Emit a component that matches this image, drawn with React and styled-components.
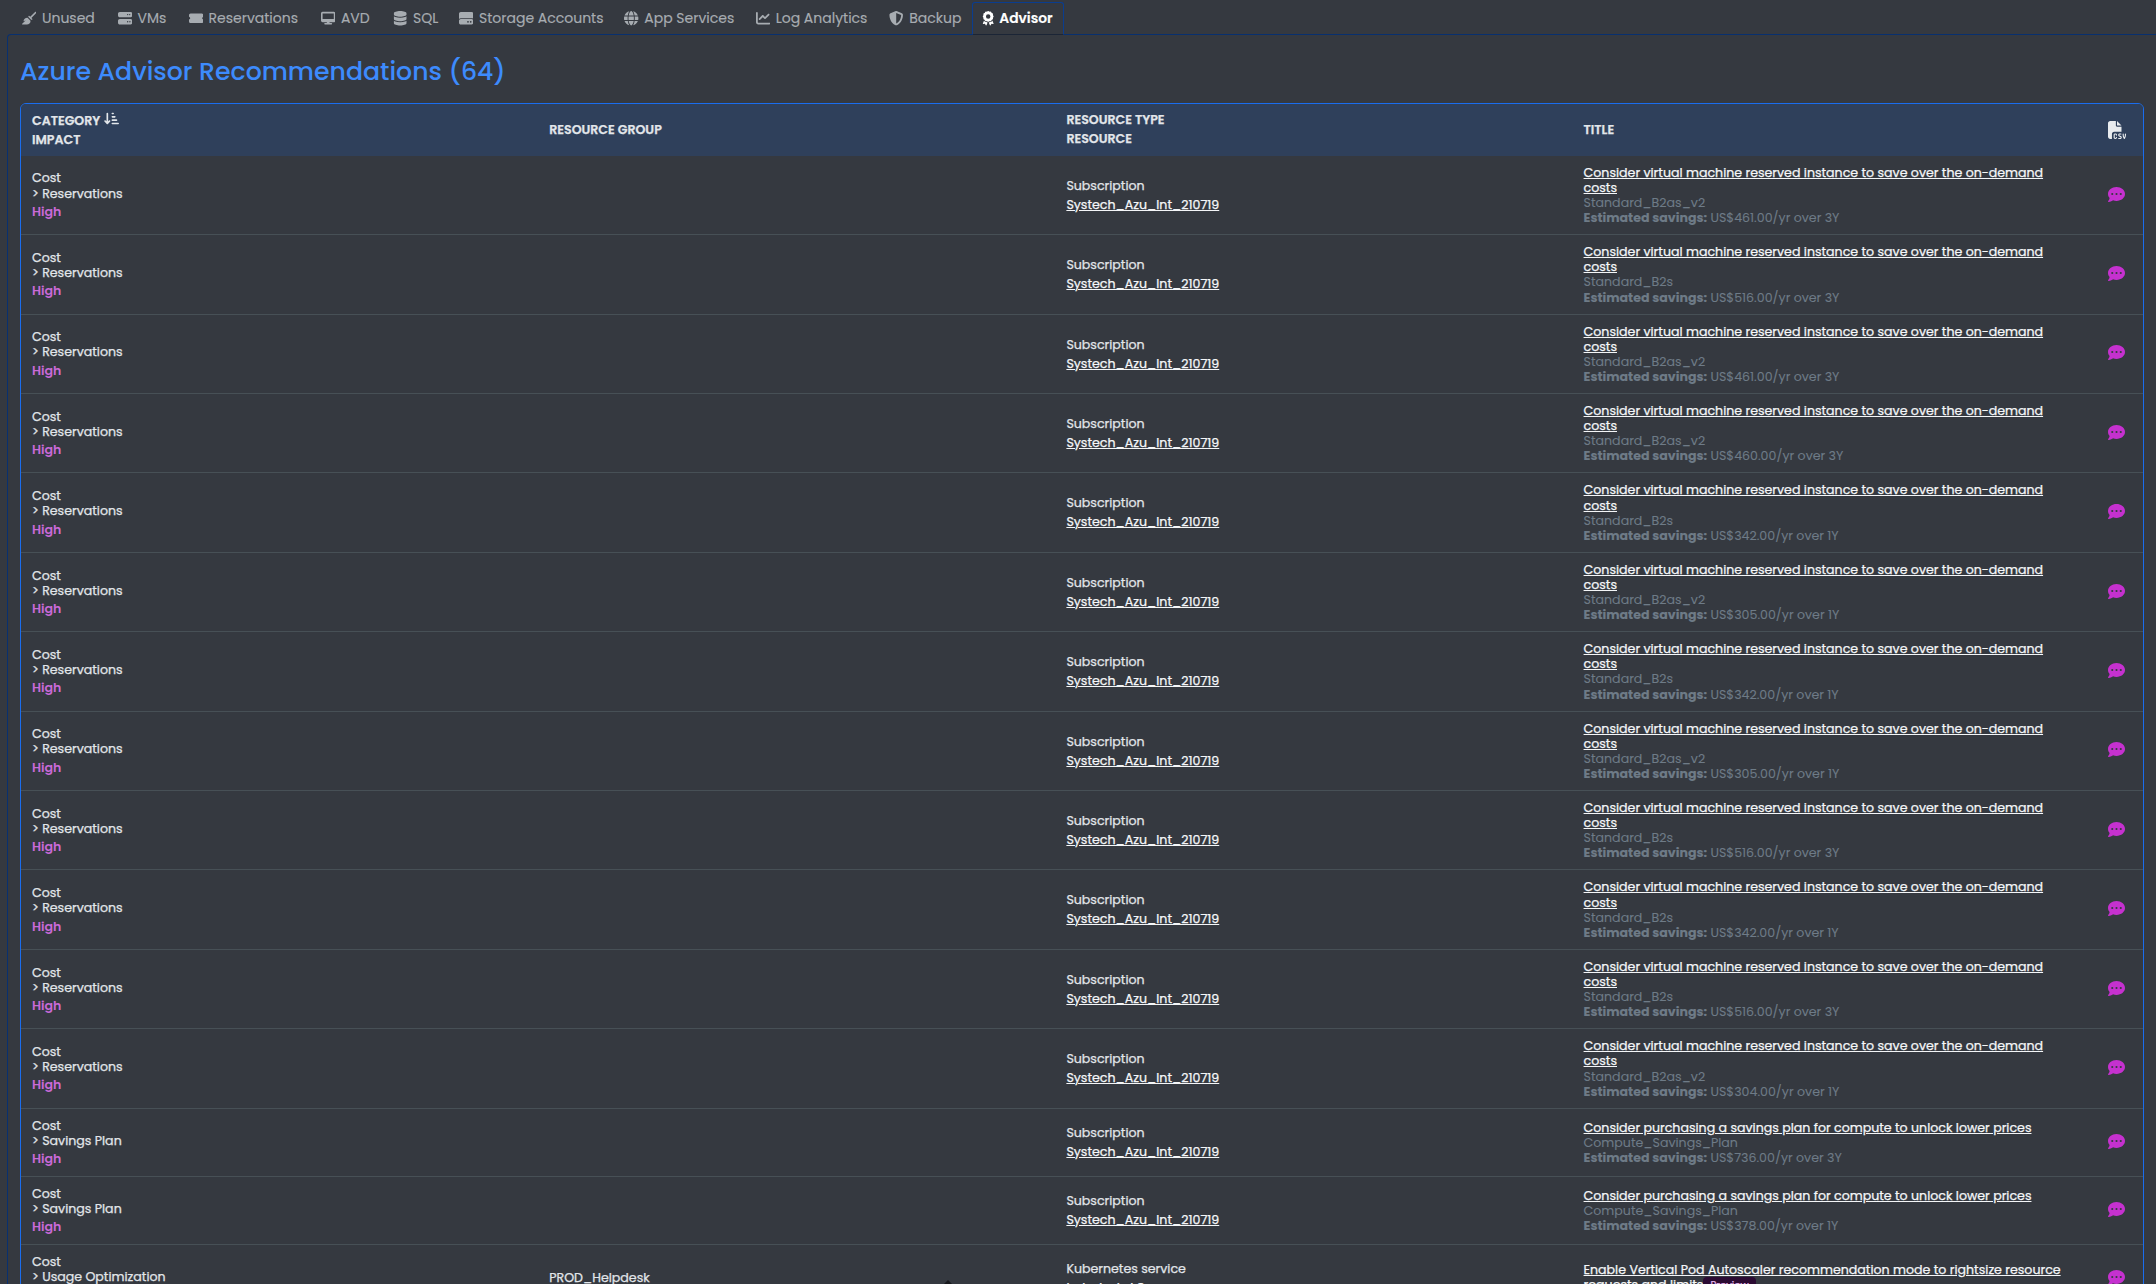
import React from "react";

import styled, { createGlobalStyle } from "styled-components";
import {
  FaBroom,
  FaServer,
  FaDesktop,
  FaDatabase,
  FaGlobe,
  FaChartLine,
  FaFileCsv,
  FaShieldHalved,
  FaAward,
  FaHardDrive,
  FaArrowDownShortWide,
  FaCommentDots,
  FaTicketSimple,
} from "react-icons/fa6";

const GlobalStyle = createGlobalStyle`
  * {
    box-sizing: border-box;
  }

  body {
    margin: 0;
    background: #353940;
    color: #e2e6ea;
    font-family: Poppins, Inter, sans-serif;
    overflow: hidden;
  }
`;

const Page = styled.div`
  display: flex;
  flex-direction: column;
  position: relative;
  height: 1284px;
  overflow: hidden;
  padding: 2px 0 0 7px;
`;

const Tabs = styled.nav`
  display: flex;
  height: 33px;
  padding-left: 5px;
  position: relative;
  z-index: 1;
`;

const Tab = styled.a`
  display: flex;
  align-items: center;
  width: ${(p) => p.$width}px;
  height: 33px;
  padding-left: ${(p) => (p.$active ? 8 : 9)}px;
  gap: ${(p) => (p.$active ? 4 : 5.6)}px;
  border: 1px solid ${(p) => (p.$active ? "#0a3d8f" : "transparent")};
  border-bottom-color: ${(p) => (p.$active ? "#1b2536" : "transparent")};
  border-radius: 3px 3px 0 0;
  color: ${(p) => (p.$active ? "#fff" : "#a7acb1")};
  font-size: ${(p) => (p.$active ? 13.8 : 14)}px;
  font-weight: ${(p) => (p.$active ? 600 : 400)};
  -webkit-text-stroke: 0.15px;
  white-space: nowrap;

  svg {
    flex: none;
    width: auto;
    height: 14.4px;
  }
`;

const Pane = styled.main`
  flex: 1;
  min-height: 0;
  margin-top: -1px;
  padding: 15px 12px 0 12px;
  border: 1px solid #08306f;
  border-width: 1px 0 0 1px;
  border-top-left-radius: 4px;
`;

const Heading = styled.h4`
  margin: 0;
  height: 53px;
  color: #3d8bfd;
  font-size: 25.2px;
  font-weight: 500;
  line-height: 43px;
`;

const Table = styled.div`
  width: 2124px;
  border: 1px solid #1a6dee;
  border-radius: 6px 6px 0 0;
  overflow: hidden;
  font-size: 12.6px;
  line-height: 18.9px;
  -webkit-text-stroke: 0.25px;
`;

const Row = styled.div`
  display: grid;
  grid-template-columns: repeat(4, 517.2px) 1fr;
  align-items: center;
  padding: 9px 0 8.92px;
  border-bottom: 1px solid #475056;
`;

const HeadRow = styled(Row)`
  height: 51.8px;
  padding: 0.8px 0 0;
  border-bottom: 0;
  background: #2f405b;
  font-weight: 600;
`;

const Cell = styled.div`
  padding-left: 11px;
  white-space: nowrap;
`;

const ResourceCell = styled(Cell)`
  padding-top: 1.4px;
`;

const Tight = styled.div`
  line-height: 15.12px;
`;

const Impact = styled.div`
  margin: 2.2px 0 -2.2px;
  color: #c96ad8;
  font-weight: 600;
  -webkit-text-stroke: 0;
`;

const Link = styled.a`
  color: #f4f6f8;
  text-decoration: underline;
`;

const Muted = styled.div`
  color: #6e7b87;
  -webkit-text-stroke: 0.1px;
`;

const SortIcon = styled(FaArrowDownShortWide)`
  margin-left: 1px;
  vertical-align: -1px;
`;

const Preview = styled.span`
  display: inline-block;
  padding: 3px 7px;
  border-radius: 4px;
  background: #2b0b33;
  color: #e3b5ec;
  font-size: 10px;
  line-height: 12px;
`;

const Action = styled.div`
  display: flex;
  padding-left: 18px;
  color: ${(p) => p.$color};
`;

const CommentIcon = styled(FaCommentDots)`
  margin-bottom: 2px;
`;

const ScrollHint = styled.div`
  position: absolute;
  left: 944px;
  bottom: 0;
  border: 4px solid transparent;
  border-top: 0;
  border-bottom-color: #17191d;
`;

const tabs = [
  { label: "Unused", icon: FaBroom, width: 95.5 },
  { label: "VMs", icon: FaServer, width: 71 },
  { label: "Reservations", icon: FaTicketSimple, width: 132.4 },
  { label: "AVD", icon: FaDesktop, width: 72.1 },
  { label: "SQL", icon: FaDatabase, width: 66 },
  { label: "Storage Accounts", icon: FaHardDrive, width: 165.3 },
  { label: "App Services", icon: FaGlobe, width: 131.4 },
  { label: "Log Analytics", icon: FaChartLine, width: 133.6 },
  { label: "Backup", icon: FaShieldHalved, width: 92.7 },
  { label: "Advisor", icon: FaAward, width: 92, active: true },
];

const vm = (sku, saving) => ({
  category: "Reservations",
  title: ["Consider virtual machine reserved instance to save over the on-demand", "costs"],
  sku,
  saving,
});

const plan = (saving) => ({
  category: "Savings Plan",
  title: ["Consider purchasing a savings plan for compute to unlock lower prices"],
  sku: "Compute_Savings_Plan",
  saving,
});

const rows = [
  vm("Standard_B2as_v2", "US$461.00/yr over 3Y"),
  vm("Standard_B2s", "US$516.00/yr over 3Y"),
  vm("Standard_B2as_v2", "US$461.00/yr over 3Y"),
  vm("Standard_B2as_v2", "US$460.00/yr over 3Y"),
  vm("Standard_B2s", "US$342.00/yr over 1Y"),
  vm("Standard_B2as_v2", "US$305.00/yr over 1Y"),
  vm("Standard_B2s", "US$342.00/yr over 1Y"),
  vm("Standard_B2as_v2", "US$305.00/yr over 1Y"),
  vm("Standard_B2s", "US$516.00/yr over 3Y"),
  vm("Standard_B2s", "US$342.00/yr over 1Y"),
  vm("Standard_B2s", "US$516.00/yr over 3Y"),
  vm("Standard_B2as_v2", "US$304.00/yr over 1Y"),
  plan("US$736.00/yr over 3Y"),
  plan("US$378.00/yr over 1Y"),
  {
    category: "Usage Optimization",
    group: "PROD_Helpdesk",
    type: "Kubernetes service",
    resource: "helpdesk-k8s",
    title: ["Enable Vertical Pod Autoscaler recommendation mode to rightsize resource", "requests and limits"],
    preview: true,
  },
];

function Recommendation({ row }) {
  return (
    <Row>
      <Cell>
        <Tight>Cost</Tight>
        <Tight>&gt; {row.category}</Tight>
        <Impact>High</Impact>
      </Cell>
      <Cell>{row.group}</Cell>
      <ResourceCell>
        <div>{row.type || "Subscription"}</div>
        <Link>{row.resource || "Systech_Azu_Int_210719"}</Link>
      </ResourceCell>
      <Cell>
        <Tight>
          {row.title.map((line) => (
            <div key={line}>
              <Link>{line}</Link>
              {row.preview && line === row.title[1] && <Preview>Preview</Preview>}
            </div>
          ))}
          {row.sku && <Muted>{row.sku}</Muted>}
          {row.saving && (
            <Muted>
              <b>Estimated savings:</b> {row.saving}
            </Muted>
          )}
        </Tight>
      </Cell>
      <Action $color="#c531cf">
        <CommentIcon size={17} />
      </Action>
    </Row>
  );
}

export default function App() {
  return (
    <Page>
      <GlobalStyle />
      <Tabs>
        {tabs.map(({ label, icon: Icon, width, active }) => (
          <Tab key={label} $width={width} $active={active}>
            <Icon />
            <span>{label}</span>
          </Tab>
        ))}
      </Tabs>
      <Pane>
        <Heading>Azure Advisor Recommendations (64)</Heading>
        <Table>
          <HeadRow>
            <Cell>
              <div>
                CATEGORY <SortIcon size={15} />
              </div>
              <div>IMPACT</div>
            </Cell>
            <Cell>RESOURCE GROUP</Cell>
            <Cell>
              <div>RESOURCE TYPE</div>
              <div>RESOURCE</div>
            </Cell>
            <Cell>TITLE</Cell>
            <Action $color="#e9ecef">
              <FaFileCsv size={18} />
            </Action>
          </HeadRow>
          {rows.map((row, i) => (
            <Recommendation key={i} row={row} />
          ))}
        </Table>
      </Pane>
      <ScrollHint />
    </Page>
  );
}
